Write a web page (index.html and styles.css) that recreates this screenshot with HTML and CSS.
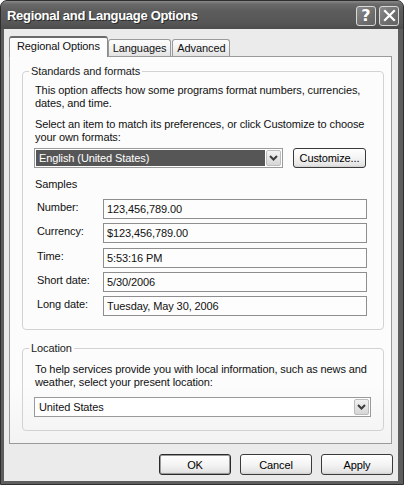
FILE: index.html
```html
<!DOCTYPE html>
<html>
<head>
<meta charset="utf-8">
<title>Regional and Language Options</title>
<link rel="stylesheet" href="styles.css">
</head>
<body>
<div class="window">
  <div class="titlebar">
    <span class="title">Regional and Language Options</span>
    <div class="tb-buttons">
      <span class="tb-btn help">?</span>
      <span class="tb-btn close">
        <svg width="13" height="13" viewBox="0 0 13 13"><path d="M2 2 L11 11 M11 2 L2 11" stroke="#fff" stroke-width="2.2" stroke-linecap="square"/></svg>
      </span>
    </div>
  </div>
  <div class="client">
    <div class="tabs">
      <div class="tab active">Regional Options</div>
      <div class="tab">Languages</div>
      <div class="tab">Advanced</div>
    </div>
    <div class="panel">
      <fieldset class="group formats">
        <legend>Standards and formats</legend>
        <div class="group-body">
          <p class="para">This option affects how some programs format numbers, currencies,<br>dates, and time.</p>
          <p class="para">Select an item to match its preferences, or click Customize to choose<br>your own formats:</p>
          <div class="select-row">
            <div class="combo combo-formats">
              <span class="combo-value selected">English (United States)</span>
              <span class="combo-arrow"><svg width="9" height="6" viewBox="0 0 9 6"><path d="M1 1 L4.5 4.5 L8 1" fill="none" stroke="#3c3c3c" stroke-width="2"/></svg></span>
            </div>
            <button class="btn btn-customize">Customize...</button>
          </div>
          <div class="samples-title">Samples</div>
          <div class="samples">
            <div class="sample"><span class="sample-label">Number:</span><span class="sample-box">123,456,789.00</span></div>
            <div class="sample"><span class="sample-label">Currency:</span><span class="sample-box">$123,456,789.00</span></div>
            <div class="sample"><span class="sample-label">Time:</span><span class="sample-box">5:53:16 PM</span></div>
            <div class="sample"><span class="sample-label">Short date:</span><span class="sample-box">5/30/2006</span></div>
            <div class="sample"><span class="sample-label">Long date:</span><span class="sample-box">Tuesday, May 30, 2006</span></div>
          </div>
        </div>
      </fieldset>
      <fieldset class="group location">
        <legend>Location</legend>
        <div class="group-body loc-body">
          <p class="para">To help services provide you with local information, such as news and<br>weather, select your present location:</p>
          <div class="combo combo-location">
            <span class="combo-value">United States</span>
            <span class="combo-arrow"><svg width="9" height="6" viewBox="0 0 9 6"><path d="M1 1 L4.5 4.5 L8 1" fill="none" stroke="#3c3c3c" stroke-width="2"/></svg></span>
          </div>
        </div>
      </fieldset>
    </div>
    <div class="dialog-buttons">
      <button class="btn btn-dlg btn-default">OK</button>
      <button class="btn btn-dlg">Cancel</button>
      <button class="btn btn-dlg">Apply</button>
    </div>
  </div>
</div>
</body>
</html>
```
FILE: styles.css
```css
html, body {
  margin: 0;
  padding: 0;
}
body {
  width: 404px;
  height: 485px;
  overflow: hidden;
  background: #ffffff;
  font-family: "Liberation Sans", Arial, sans-serif;
  font-size: 11px;
  letter-spacing: -0.1px;
  color: #111;
}
.window {
  width: 404px;
  height: 485px;
  box-sizing: border-box;
  display: flex;
  flex-direction: column;
  background: #5e5e5e;
  border: 1px solid #2e2e2e;
  border-radius: 7px 7px 0 0;
  overflow: hidden;
}
.titlebar {
  height: 28px;
  flex: none;
  display: flex;
  align-items: center;
  justify-content: space-between;
  padding: 0 4px 0 6px;
  background: linear-gradient(#8a8a8a 0, #6a6a6a 3px, #5c5c5c 10px, #565656 22px, #4c4c4c 28px);
}
.title {
  color: #fff;
  font-weight: bold;
  font-size: 13px;
  letter-spacing: -0.3px;
  text-shadow: 1px 1px 0 #2a2a2a;
  margin-top: 1px;
}
.tb-buttons {
  display: flex;
  gap: 3px;
  margin-top: 1px;
}
.tb-btn {
  width: 20px;
  height: 20px;
  box-sizing: border-box;
  border: 1px solid #d8d8d8;
  border-radius: 3px;
  background: linear-gradient(135deg, #8a8a8a, #6e6e6e 60%, #626262);
  display: flex;
  align-items: center;
  justify-content: center;
  color: #fff;
  font-weight: bold;
  font-size: 16px;
  font-family: "DejaVu Sans", sans-serif;
  letter-spacing: 0;
  line-height: 1;
}
.client {
  flex: 1;
  margin: 0 5px 3px 3px;
  background: #ebebeb;
  display: flex;
  flex-direction: column;
}
.tabs {
  display: flex;
  align-items: flex-end;
  margin: 8px 0 0 5px;
  height: 19px;
  position: relative;
  z-index: 1;
}
.tab {
  height: 17px;
  box-sizing: border-box;
  padding: 2px 4px 0;
  border: 1px solid #9a9a9a;
  border-bottom: none;
  border-radius: 3px 3px 0 0;
  background: linear-gradient(#fdfdfd, #f0f0f0 60%, #e2e2e2);
  line-height: 13px;
  margin-right: 1px;
  white-space: nowrap;
}
.tab.active {
  height: 21px;
  margin-bottom: -1px;
  margin-right: 0;
  padding: 2px 7px 0 7px;
  background: #fcfcfc;
  border-color: #8a8a8a;
  border-top: 2px solid #6a6a6a;
}
.panel {
  height: 388px;
  box-sizing: border-box;
  margin: 0 6px 0 5px;
  border: 1px solid #9a9a9a;
  background: linear-gradient(#fcfcfc 0, #fcfcfc 85%, #f3f3f3 100%);
  padding: 8px 0 0 12px;
}
.group {
  width: 362px;
  box-sizing: border-box;
  margin: 0;
  padding: 0;
  min-width: 0;
  border: 1px solid #d2d2d2;
  border-radius: 4px;
}
.group legend {
  margin-left: 6px;
  padding: 0 2px;
  line-height: 13px;
  color: #1a1a1a;
}
.group-body {
  padding: 6px 0 13px 12px;
}
.para {
  margin: 0 0 8px 0;
  line-height: 13px;
}
.select-row {
  display: flex;
  gap: 10px;
  margin-top: -4px;
  margin-left: -1px;
}
.combo {
  height: 20px;
  box-sizing: border-box;
  border: 1px solid #9a9a9a;
  background: #fff;
  display: flex;
  align-items: stretch;
  padding: 1px;
}
.combo-formats {
  width: 249px;
}
.combo-value {
  flex: 1;
  padding-left: 3px;
  line-height: 16px;
}
.combo-value.selected {
  background: #565656;
  color: #fff;
  margin-right: 1px;
}
.combo-arrow {
  width: 15px;
  box-sizing: border-box;
  border: 1px solid #bcbcbc;
  border-radius: 2px;
  background: linear-gradient(#f2f2f2, #d6d6d6);
  display: flex;
  align-items: center;
  justify-content: center;
}
.btn {
  font-family: "Liberation Sans", Arial, sans-serif;
  font-size: 11px;
  letter-spacing: -0.1px;
  color: #000;
  height: 20px;
  box-sizing: border-box;
  border: 1px solid #3a3a3a;
  border-radius: 3px;
  background: linear-gradient(#ffffff, #f4f4f4 50%, #e4e4e4 90%, #cfcfcf);
  padding: 0;
  line-height: 16px;
}
.btn-customize {
  width: 73px;
}
.samples-title {
  margin-top: 10px;
  line-height: 13px;
}
.samples {
  margin-top: 8px;
  display: flex;
  flex-direction: column;
  gap: 4.3px;
}
.sample {
  display: flex;
  align-items: flex-start;
}
.sample-label {
  width: 66px;
  padding-left: 2px;
  line-height: 13px;
  padding-top: 2px;
}
.sample-box {
  width: 264px;
  height: 20px;
  box-sizing: border-box;
  border: 1px solid #8e8e8e;
  background: #fdfdfd;
  padding: 2px 0 0 3px;
  line-height: 15px;
}
.location {
  margin-top: 12px;
}
.loc-body {
  padding-top: 8px;
  padding-bottom: 13px;
}
.loc-body .para {
  margin-bottom: 8px;
}
.combo-location {
  width: 337px;
  margin-left: -1px;
}
.dialog-buttons {
  display: flex;
  justify-content: flex-end;
  gap: 9px;
  margin: 10px 5px 0 0;
}
.btn-dlg {
  width: 72px;
  height: 21px;
}
.btn-default {
  border-color: #2a2a2a;
  box-shadow: inset 0 0 0 1px #9a9a9a;
}
```
